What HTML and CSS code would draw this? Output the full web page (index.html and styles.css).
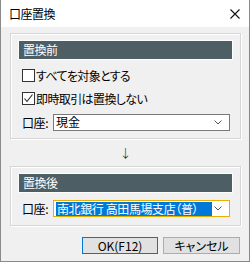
FILE: index.html
```html
<!DOCTYPE html>
<html lang="ja">
<head>
    <meta charset="UTF-8">
    <title>口座置換</title>
    <link rel="stylesheet" href="styles.css">
</head>
<body>
    <div class="window">
        <div class="titlebar">
            <span class="title">口座置換</span>
            <svg class="close" width="10" height="10" viewBox="0 0 10 10">
                <path d="M0.5 0.5 L9.5 9.5 M9.5 0.5 L0.5 9.5" stroke="#111" stroke-width="1.1" fill="none"/>
            </svg>
        </div>
        <div class="content">
            <div class="group">
                <div class="group-head">置換前</div>
                <label class="row">
                    <span class="check"></span>
                    <span class="text">すべてを対象とする</span>
                </label>
                <label class="row">
                    <span class="check">
                        <svg width="11" height="11" viewBox="0 0 11 11">
                            <path d="M1.5 5.5 L4 8.5 L9.5 1.5" stroke="#222" stroke-width="1.1" fill="none"/>
                        </svg>
                    </span>
                    <span class="text">即時取引は置換しない</span>
                </label>
                <div class="row row-last">
                    <span class="field-label">口座:</span>
                    <div class="select">
                        <span class="value">現金</span>
                        <svg class="chevron" width="8" height="5" viewBox="0 0 8 5">
                            <path d="M0.5 0.5 L4 4 L7.5 0.5" stroke="#555" stroke-width="1" fill="none"/>
                        </svg>
                    </div>
                </div>
            </div>
            <div class="arrow">↓</div>
            <div class="group">
                <div class="group-head">置換後</div>
                <div class="row row-single">
                    <span class="field-label">口座:</span>
                    <div class="select focused">
                        <span class="value selected">南北銀行 高田馬場支店（普）</span>
                        <svg class="chevron" width="8" height="5" viewBox="0 0 8 5">
                            <path d="M0.5 0.5 L4 4 L7.5 0.5" stroke="#555" stroke-width="1" fill="none"/>
                        </svg>
                    </div>
                </div>
            </div>
            <div class="buttons">
                <button class="btn btn-default">OK(F12)</button>
                <button class="btn btn-cancel">キャンセル</button>
            </div>
        </div>
    </div>
</body>
</html>
```

FILE: styles.css
```css
* {
    margin: 0;
    padding: 0;
    box-sizing: border-box;
}

body {
    background: #f0f0f0;
    font-family: "Noto Sans CJK JP", "Noto Sans", sans-serif;
    font-size: 11px;
    font-feature-settings: "palt";
    color: #000;
}

.window {
    width: 250px;
    height: 262px;
    border: 1px solid #8a8a8a;
    border-top: none;
    background: #f0f0f0;
}

.titlebar {
    height: 27px;
    background: #fff;
    display: flex;
    align-items: center;
    justify-content: space-between;
    padding: 0 9px 0 8px;
}

.title {
    font-size: 12px;
    letter-spacing: -0.5px;
}

.content {
    padding: 6px 8px 0 9px;
}

.group {
    border: 1px solid #d6d6d6;
    box-shadow: 1px 1px 0 #fff, inset 1px 1px 0 #fff;
    padding: 7px 8px 4px 8px;
}

.group-head {
    height: 18px;
    background: #4e5e65;
    box-shadow: 0 0 0 1px #fdfdfd;
    color: #fff;
    font-size: 12px;
    line-height: 18px;
    padding-left: 4px;
    letter-spacing: -0.5px;
    margin-bottom: 5px;
}

.row {
    display: flex;
    align-items: center;
    height: 23px;
    padding: 0 2px 0 3px;
}

.row-last {
    height: 24px;
}

.row-single {
    margin-bottom: 1px;
}

.check {
    width: 13px;
    height: 13px;
    border: 1px solid #333;
    background: #fff;
    display: flex;
    align-items: center;
    justify-content: center;
    margin-right: 1px;
}

.text {
    font-size: 12px;
    letter-spacing: -0.6px;
}

.field-label {
    width: 31px;
    font-size: 12px;
    letter-spacing: -0.4px;
}

.select {
    flex: 1;
    height: 17px;
    border: 1px solid #7a7a7a;
    background: #fff;
    display: flex;
    align-items: center;
    justify-content: space-between;
    padding: 0 7px 0 2px;
}

.select .value {
    font-size: 12px;
    line-height: 14px;
}

.select.focused {
    border-color: #e8b100;
}

.value.selected {
    background: #0078d7;
    color: #fff;
    width: 156px;
    padding-left: 1px;
    letter-spacing: -0.4px;
    white-space: nowrap;
}

.chevron {
    flex-shrink: 0;
}

.arrow {
    height: 27px;
    line-height: 27px;
    text-align: center;
    font-size: 12px;
    font-weight: 300;
    color: #222;
}

.buttons {
    display: flex;
    justify-content: flex-end;
    gap: 5px;
    margin-top: 11px;
    padding-right: 1px;
}

.btn {
    height: 17px;
    border: 1px solid #adadad;
    background: #e1e1e1;
    font-family: "Noto Sans CJK JP", "Noto Sans", sans-serif;
    font-size: 12px;
    font-feature-settings: "palt";
    line-height: 15px;
    color: #000;
}

.btn-default {
    width: 76px;
    border-color: #0078d7;
}

.btn-cancel {
    width: 77px;
}
```
